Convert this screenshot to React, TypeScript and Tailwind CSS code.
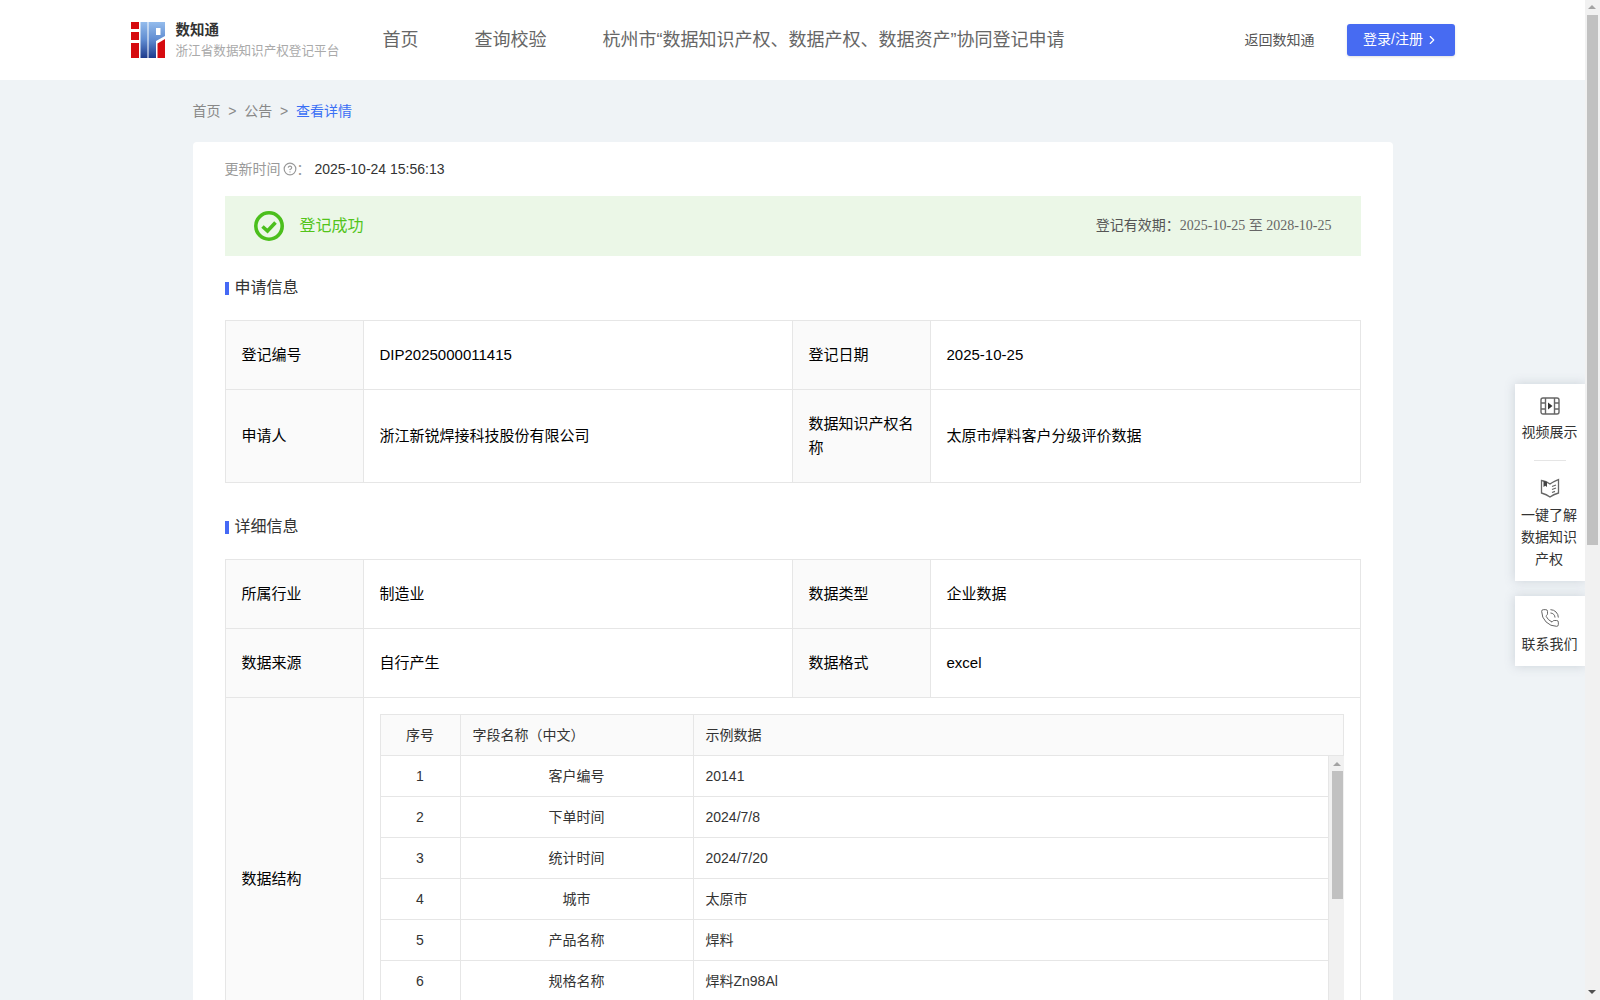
import { ChevronRight, CircleHelp, PhoneCall } from 'lucide-react';

const fieldRows = [
  ['1', '客户编号', '20141'],
  ['2', '下单时间', '2024/7/8'],
  ['3', '统计时间', '2024/7/20'],
  ['4', '城市', '太原市'],
  ['5', '产品名称', '焊料'],
  ['6', '规格名称', '焊料Zn98Al'],
];

function Logo() {
  return (
    <svg width="34" height="36" viewBox="0 0 34 36" className="shrink-0">
      <defs>
        <linearGradient id="logoBlue" x1="0" y1="0" x2="0" y2="1">
          <stop offset="0" stopColor="#94bcec" />
          <stop offset="0.5" stopColor="#5f8bd0" />
          <stop offset="1" stopColor="#1c3a8c" />
        </linearGradient>
      </defs>
      <rect x="0" y="0" width="8" height="7" fill="#d60b0f" />
      <rect x="0" y="10" width="8" height="8" fill="#d60b0f" />
      <rect x="0" y="21" width="8" height="15" fill="#d60b0f" />
      <rect x="9.500" y="0" width="7" height="36" fill="url(#logoBlue)" />
      <path d="M17.500 0H34V14L25 19V36H17.500Z M25 6V13H29.500V6Z" fill="url(#logoBlue)" fillRule="evenodd" />
      <path d="M26.500 21.500L34 17V36H26.500Z" fill="#d60b0f" />
    </svg>
  );
}

function FilmIcon() {
  return (
    <svg width="20" height="20" viewBox="0 0 20 20" fill="none" stroke="#666" strokeWidth="1.4">
      <rect x="1" y="2" width="18" height="16" rx="2" />
      <path d="M5.500 2V18M14.500 2V18M1 7H5.500M1 13H5.500M14.500 7H19M14.500 13H19" />
      <path d="M8 6.500L12.500 10L8 13.500Z" fill="#333" stroke="none" />
    </svg>
  );
}

function BookIcon() {
  return (
    <svg width="20" height="20" viewBox="0 0 20 20" fill="none" stroke="#666" strokeWidth="1.3">
      <path d="M1.500 2.500C4.500 2.800 7.500 4 10 6C12.500 4 15.500 2.800 18.500 1.500V15C15.500 15.800 12.500 17 10 19C7.500 17 4.500 15.800 1.500 15Z" />
      <path d="M3.500 2.800V9L5.300 7.800L7 9V4" fill="#444" stroke="none" />
      <path d="M12 8.500L16 7M12 11.500L16 10M12 14.500L15 13.400" />
    </svg>
  );
}

function SectionTitle({ title }: { title: string }) {
  return (
    <div className="flex items-center h-6 gap-[6px]">
      <span className="w-1 h-[13px] mt-[2px] bg-[#4569f5]" />
      <span className="text-base pt-[2px] text-[#333]">{title}</span>
    </div>
  );
}

const labelCell = 'border border-[#e6e6e6] bg-[#fafafa] px-4 text-[15px] leading-6 text-black';
const valueCell = 'border border-[#e6e6e6] px-4 text-[15px] leading-6 text-black';
const nestedCell = 'border border-[#e6e6e6] px-3 text-sm text-[#333] h-[41px]';

export default function App() {
  return (
    <div className="h-[1000px] w-full overflow-hidden flex bg-[#eff3f6] font-['Liberation_Sans','Noto_Sans_CJK_SC',sans-serif]">
      <div className="relative w-[1585px] h-full overflow-hidden">
        {/* Header */}
        <header className="h-20 bg-white">
          <div className="w-[1324px] h-full mx-auto flex items-center">
            <Logo />
            <div className="ml-[11px] w-[164px]">
              <div className="text-[14.5px] font-bold leading-5 text-[#333]">数知通</div>
              <div className="text-[12.6px] leading-5 mt-px text-[#aaa] whitespace-nowrap">浙江省数据知识产权登记平台</div>
            </div>
            <nav className="ml-[43px] flex gap-[56px] text-lg text-[#666]">
              <span>首页</span>
              <span>查询校验</span>
              <span>杭州市“数据知识产权、数据产权、数据资产”协同登记申请</span>
            </nav>
            <span className="ml-auto text-sm text-[#555]">返回数知通</span>
            <button className="ml-8 w-[108px] h-8 rounded-[3px] bg-[#476bf2] text-white text-sm flex items-center justify-center gap-[2px] pl-px shadow-sm">
              <span className="-mt-[2px]">登录/注册</span>
              <ChevronRight size={14} />
            </button>
          </div>
        </header>

        <main className="w-[1200px] mx-auto">
          {/* Breadcrumb */}
          <div className="flex items-center h-5 mt-[21px] gap-[7.8px] text-sm text-[#888]">
            <span>首页</span>
            <span>&gt;</span>
            <span>公告</span>
            <span>&gt;</span>
            <span className="text-[#3a6ff5]">查看详情</span>
          </div>

          {/* Card */}
          <div className="mt-[21px] bg-white rounded-t-[4px] px-8 pt-[17px] pb-8">
            <div className="flex items-center h-5 text-sm">
              <span className="text-[#999]">更新时间</span>
              <CircleHelp size={14} className="ml-[2px] text-[#999]" />
              <span className="text-[#999] w-[18px]">：</span>
              <span className="text-[#333]">2025-10-24 15:56:13</span>
            </div>

            <div className="mt-[17px] h-[60px] bg-[#ebf7e7] flex items-center pl-[29px] pr-[29px]">
              <svg width="30" height="30" viewBox="0 0 30 30" fill="none" stroke="#4bbf1c">
                <circle cx="15" cy="15" r="13.200" strokeWidth="3.600" />
                <path d="M8.500 15.500L13.500 20L21.500 11.500" strokeWidth="3.600" />
              </svg>
              <span className="ml-4 text-base text-[#52c41a]">登记成功</span>
              <span className="ml-auto -mt-px text-sm text-[#555]">
                登记有效期：<span className="font-['Liberation_Serif','Noto_Sans_CJK_SC',serif] text-[#666]">2025-10-25 至 2028-10-25</span>
              </span>
            </div>

            <div className="mt-[19px]">
              <SectionTitle title="申请信息" />
            </div>

            <table className="mt-[21px] w-[1135px] table-fixed border-collapse">
              <colgroup>
                <col className="w-[138px]" />
                <col className="w-[429px]" />
                <col className="w-[138px]" />
                <col className="w-[430px]" />
              </colgroup>
              <tbody>
                <tr className="h-[69px]">
                  <td className={labelCell}>登记编号</td>
                  <td className={valueCell}>DIP2025000011415</td>
                  <td className={labelCell}>登记日期</td>
                  <td className={valueCell}>2025-10-25</td>
                </tr>
                <tr className="h-[93px]">
                  <td className={labelCell}>申请人</td>
                  <td className={valueCell}>浙江新锐焊接科技股份有限公司</td>
                  <td className={labelCell}>数据知识产权名称</td>
                  <td className={valueCell}>太原市焊料客户分级评价数据</td>
                </tr>
              </tbody>
            </table>

            <div className="mt-[31px]">
              <SectionTitle title="详细信息" />
            </div>

            <table className="mt-[21px] w-[1135px] table-fixed border-collapse">
              <colgroup>
                <col className="w-[138px]" />
                <col className="w-[429px]" />
                <col className="w-[138px]" />
                <col className="w-[430px]" />
              </colgroup>
              <tbody>
                <tr className="h-[69px]">
                  <td className={labelCell}>所属行业</td>
                  <td className={valueCell}>制造业</td>
                  <td className={labelCell}>数据类型</td>
                  <td className={valueCell}>企业数据</td>
                </tr>
                <tr className="h-[69px]">
                  <td className={labelCell}>数据来源</td>
                  <td className={valueCell}>自行产生</td>
                  <td className={labelCell}>数据格式</td>
                  <td className={valueCell}>excel</td>
                </tr>
                <tr>
                  <td className={labelCell}>数据结构</td>
                  <td colSpan={3} className="border border-[#e6e6e6] p-4">
                    <table className="w-full table-fixed border-collapse">
                      <colgroup>
                        <col className="w-[80px]" />
                        <col className="w-[233px]" />
                        <col />
                      </colgroup>
                      <thead>
                        <tr className="bg-[#fafafa]">
                          <th className={nestedCell + ' font-normal text-center'}>序号</th>
                          <th className={nestedCell + ' font-normal text-left'}>字段名称（中文）</th>
                          <th className={nestedCell + ' font-normal text-left'}>示例数据</th>
                        </tr>
                      </thead>
                    </table>
                    <div className="flex h-[288px] -mt-px overflow-hidden">
                      <table className="w-[949px] h-fit table-fixed border-collapse">
                        <colgroup>
                          <col className="w-[80px]" />
                          <col className="w-[233px]" />
                          <col />
                        </colgroup>
                        <tbody>
                          {fieldRows.map(row => (
                            <tr key={row[0]}>
                              <td className={nestedCell + ' text-center'}>{row[0]}</td>
                              <td className={nestedCell + ' text-center'}>{row[1]}</td>
                              <td className={nestedCell}>{row[2]}</td>
                            </tr>
                          ))}
                        </tbody>
                      </table>
                      {/* Inner scrollbar */}
                      <div className="relative w-[15px] h-full mt-px bg-[#f1f1f1]">
                        <span className="absolute left-[4px] top-[6px] w-0 h-0 border-x-4 border-b-4 border-x-transparent border-b-[#a3a3a3]" />
                        <span className="absolute left-[3px] top-[15px] w-[11px] h-[128px] bg-[#c1c1c1]" />
                      </div>
                    </div>
                  </td>
                </tr>
              </tbody>
            </table>
          </div>
        </main>

        {/* Floating side panels */}
        <div className="absolute right-0 top-[384px] w-[70px] text-sm leading-[22px] text-[#333] text-center">
          <div className="bg-white shadow-[0_0_10px_rgba(100,110,130,0.25)] h-[197px] pt-3">
            <div className="flex justify-center"><FilmIcon /></div>
            <div className="mt-[5px] pr-px">视频展示</div>
            <div className="w-8 h-px mx-auto mt-[17px] bg-[#e5e5e5]" />
            <div className="flex justify-center mt-[17px]"><BookIcon /></div>
            <div className="mt-[6px] ml-[6px] w-[56px]">一键了解数据知识产权</div>
          </div>
          <div className="mt-[15px] bg-white shadow-[0_0_10px_rgba(100,110,130,0.25)] h-[70px] pt-3">
            <div className="flex justify-center"><PhoneCall size={20} strokeWidth={1.2} className="text-[#666]" /></div>
            <div className="mt-[5px] pr-px">联系我们</div>
          </div>
        </div>
      </div>

      {/* Page scrollbar */}
      <div className="relative w-[15px] h-full bg-[#f1f1f1]">
        <span className="absolute left-[3px] top-[5px] w-0 h-0 border-x-4 border-b-4 border-x-transparent border-b-[#a3a3a3]" />
        <span className="absolute left-[2px] top-[15px] w-[11px] h-[530px] bg-[#c1c1c1]" />
        <span className="absolute left-[3px] bottom-[6px] w-0 h-0 border-x-4 border-t-4 border-x-transparent border-t-[#505050]" />
      </div>
    </div>
  );
}
